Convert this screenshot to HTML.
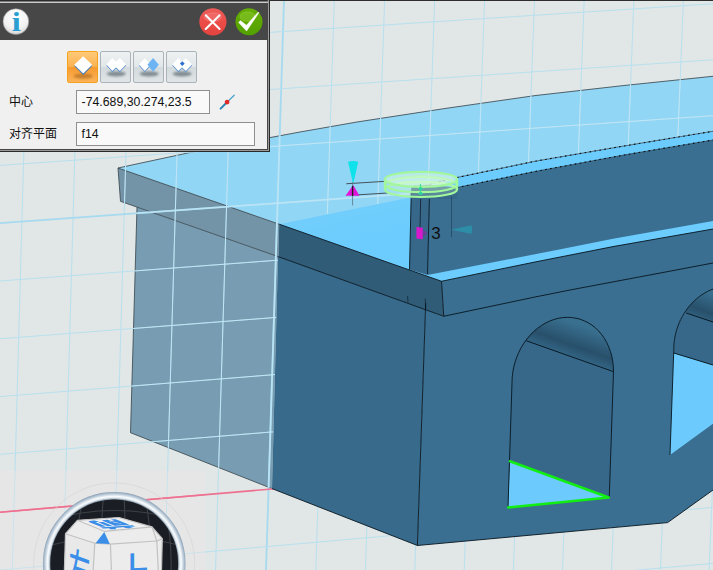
<!DOCTYPE html>
<html lang="zh">
<head>
<meta charset="utf-8">
<title>3D view</title>
<style>
html,body{margin:0;padding:0;}
body{width:713px;height:570px;overflow:hidden;background:#e1e6e6;position:relative;font-family:"Liberation Sans","Noto Sans CJK SC",sans-serif;}
#scene{position:absolute;left:0;top:0;width:713px;height:570px;display:block;}
#panel{position:absolute;left:0;top:0;width:267px;height:149px;background:#f0f0f0;border-right:1px solid #464646;border-bottom:1px solid #464646;box-shadow:1px 1px 0 0 #9a9a9a, 1px 0 0 0 #9a9a9a, 0 1px 0 0 #9a9a9a, 2px 2px 0 0 #2a2a2a, 2px 0 0 0 #2a2a2a, 0 2px 0 0 #2a2a2a;}
#topline{position:absolute;left:0;top:0;width:713px;height:1px;background:#2e2e2e;}
#phead{position:absolute;left:0;top:0;width:267px;height:40px;background:#474747;border-top:2px solid #2b2b2b;box-sizing:border-box;}
#phead:before{content:"";position:absolute;left:0;top:-1px;width:268px;height:2px;background:linear-gradient(#7a7a7a 0,#7a7a7a 50%,#cacaca 50%,#cacaca 100%);}
.lbl{position:absolute;left:9px;font-size:12px;color:#111;line-height:14px;white-space:nowrap;}
.inp{position:absolute;left:76px;height:22px;border:1px solid #8f8f8f;background:#f9f9f9;box-sizing:content-box;font-size:12.3px;line-height:22px;color:#111;padding-left:4.6px;white-space:nowrap;}
.btn{position:absolute;top:51px;width:29px;height:30px;border:1px solid #a9b3b9;border-radius:2px;background:linear-gradient(#eef1f2 0%,#e2e7e9 50%,#d3dadd 51%,#dfe4e6 100%);}
.btn.sel{border-color:#f5a21c;background:linear-gradient(#ffc978 0%,#fbb352 48%,#f79a2e 52%,#fbb45a 100%);}
.btn svg{position:absolute;left:0;top:0;}
</style>
</head>
<body>
<svg id="scene" width="713" height="570" viewBox="0 0 713 570">
<defs>
<linearGradient id="soffit1" gradientUnits="userSpaceOnUse" x1="560" y1="318" x2="548" y2="352">
<stop offset="0" stop-color="#39708f"/><stop offset="0.6" stop-color="#28506b"/><stop offset="1" stop-color="#356a8b"/>
</linearGradient>
<linearGradient id="soffit2" gradientUnits="userSpaceOnUse" x1="706" y1="290" x2="694" y2="322">
<stop offset="0" stop-color="#39708f"/><stop offset="0.6" stop-color="#28506b"/><stop offset="1" stop-color="#356a8b"/>
</linearGradient>
<linearGradient id="topfade" gradientUnits="userSpaceOnUse" x1="340" y1="205" x2="352" y2="250">
<stop offset="0" stop-color="#72cefc"/><stop offset="1" stop-color="#6bccfd"/>
</linearGradient>
<clipPath id="arch1"><path id="a1p" d="M512.0,382.8 L512.2,377.6 L512.8,372.3 L513.7,367.2 L515.1,362.1 L516.8,357.1 L518.8,352.3 L521.2,347.6 L523.9,343.2 L526.9,339.0 L530.1,335.2 L533.6,331.6 L537.4,328.4 L541.3,325.6 L545.4,323.1 L549.6,321.1 L553.9,319.5 L558.3,318.3 L562.8,317.6 L567.2,317.3 L571.6,317.5 L575.9,318.2 L580.1,319.2 L584.2,320.8 L588.1,322.7 L591.9,325.1 L595.4,327.8 L598.6,331.0 L601.6,334.5 L604.3,338.3 L606.7,342.4 L608.7,346.8 L610.4,351.4 L611.8,356.2 L612.7,361.1 L613.3,366.2 L613.5,371.4 L609.25,497.5 L508,507.5 Z"/></clipPath>
<clipPath id="arch2"><path id="a2p" d="M673.8,349.6 L673.8,346.2 L674.1,342.8 L674.5,339.4 L675.1,336.0 L675.9,332.7 L676.8,329.3 L677.9,326.1 L679.2,322.9 L680.6,319.7 L682.2,316.7 L683.9,313.7 L685.8,310.9 L687.7,308.1 L689.8,305.5 L692.1,303.1 L694.4,300.7 L696.8,298.6 L699.4,296.5 L702.0,294.7 L704.7,293.0 L707.4,291.5 L710.2,290.2 L713.1,289.0 L716.0,288.1 L716,421.5 L670,455 Z"/></clipPath>
<clipPath id="ovlclip">
<path d="M118,168 L190,152.5 L270,137.6 L300,132 L357,122 L445,108.5 L535,95.6 L624,85.5 L713,76.25 L713,131.25 L624,146 L535,161.25 L457,177.5 L410,197.5 L279.2,224.2 L272,488.6 L130.5,432.7 L137,207.1 L120.5,201.3 Z"/>
</clipPath>
</defs>
<rect x="0" y="0" width="713" height="570" fill="#e1e6e6"/>

<!-- overlay (grid plane in front) model parts -->
<g id="ovl">
<path d="M118,168 L190,152.5 L270,137.6 L300,132 L357,122 L445,108.5 L535,95.6 L624,85.5 L713,76.25 L713,131.25 L624,146 L535,161.25 L457,177.5 L410,197.5 L279.2,224.2 Z" fill="#92d6f5"/>
<path d="M118,168 L279.2,224.2 L278.4,256.7 L120.5,201.3 Z" fill="#7394a6"/>
<path d="M137,207.1 L278,256.5 L272,488.6 L130.5,432.7 Z" fill="#789db2"/>
<g fill="none" stroke="#3c4a52" stroke-width="1" stroke-opacity="0.85">
<path d="M118,168 L190,152.5 L270,137.6 L300,132 L357,122 L445,108.5 L535,95.6 L624,85.5 L713,76.25"/>
<path d="M118,168 L279.2,224.2"/>
<path d="M118,168 L120.5,201.3 L278.4,256.7"/>
<path d="M137,207.1 L130.5,432.7 L272,488.6"/>
</g>
</g>

<!-- grid -->
<g stroke="#b8e0ef" stroke-width="1" fill="none" style="--maj:#a6daf0"><g id="grid">
<path d="M-23.2,0 L-38.5,570" stroke-width="1"/>
<path d="M28.0,0 L12.3,570" stroke-width="1"/>
<path d="M79.2,0 L63.1,570" stroke-width="1"/>
<path d="M130.4,0 L113.9,570" stroke-width="1"/>
<path d="M181.6,0 L164.7,570" stroke-width="1"/>
<path d="M232.8,0 L215.5,570" stroke-width="1"/>
<path d="M284.0,0 L266.0,570" stroke-width="1.8" style="stroke:var(--maj)"/>
<path d="M334.3,0 L315.8,570" stroke-width="1"/>
<path d="M384.6,0 L365.4,570" stroke-width="1"/>
<path d="M434.7,0 L414.8,570" stroke-width="1"/>
<path d="M484.6,0 L464.2,570" stroke-width="1"/>
<path d="M534.5,0 L513.4,570" stroke-width="1"/>
<path d="M584.2,0 L562.5,570" stroke-width="1"/>
<path d="M633.9,0 L611.5,570" stroke-width="1"/>
<path d="M683.4,0 L660.4,570" stroke-width="1"/>
<path d="M732.7,0 L709.1,570" stroke-width="1"/>
<path d="M0,-8.0 L713,-52.2" stroke-width="1"/>
<path d="M0,49.8 L713,3.8" stroke-width="1"/>
<path d="M0,107.6 L713,59.8" stroke-width="1"/>
<path d="M0,165.4 L713,115.7" stroke-width="1"/>
<path d="M0,223.2 L713,171.7" stroke-width="1.8" style="stroke:var(--maj)"/>
<path d="M0,281.0 L713,227.6" stroke-width="1"/>
<path d="M0,338.8 L713,283.6" stroke-width="1"/>
<path d="M0,396.6 L713,339.5" stroke-width="1"/>
<path d="M0,454.4 L713,395.5" stroke-width="1"/>
<path d="M0,512.2 L713,451.4" stroke="#ee6f8f" stroke-width="1.6"/>
<path d="M0,570.0 L713,507.4" stroke-width="1"/>
<path d="M0,627.8 L713,563.3" stroke-width="1"/>
</g></g>
<g clip-path="url(#ovlclip)" stroke="#c4eaf9" stroke-opacity="0.56" stroke-width="1" fill="none" style="--maj:#c8ecfa"><use href="#grid"/></g>

<!-- opaque model parts -->
<g id="solid">
<path d="M279.2,224.2 L410,197.5 L457,177.5 L535,161.25 L624,146 L713,131.25 L713,232 L441.5,281.25 Z" fill="#6bccfd"/>
<path d="M279.2,224.2 L410,197.5 L410,268 Z" fill="url(#topfade)"/>
<path d="M429.5,192 L457,187.5 L535,171.5 L624,155 L713,140 L713,220.9 L613,238.8 L558,249.8 L427.5,275 Z" fill="#3a6f91"/>
<path d="M411.25,190 L429.5,192 L427.5,275 L409.5,269.5 Z" fill="#37688a"/>
<path d="M279.2,224.2 L441.5,281.25 L443.75,316.25 L278.4,256.7 Z" fill="#305c78"/>
<path d="M278,256.5 L425.5,309.5 L417.4,545.5 L272,488.6 Z" fill="#376a8b"/>
<path d="M441.5,281.25 L535,262 L613,246.6 L713,229 L713,490 L667.6,522.6 L417.4,545.5 L425.5,309.5 L443.75,316.25 Z" fill="#3a6f91"/>
<!-- arch 1 -->
<g clip-path="url(#arch1)">
<rect x="500" y="310" width="120" height="200" fill="#37688a"/>
<path d="M500,332 L526.25,340.75 L613.75,371.75 L620,374 L620,310 L500,310 Z" fill="url(#soffit1)"/>
<path d="M510,461.25 L608.75,497.5 L508,507.5 Z" fill="#6ccbfc"/>
<path d="M526.25,340.75 L613.75,371.75" stroke="#0a1a24" stroke-width="1" fill="none"/>
</g>
<!-- arch 2 -->
<g clip-path="url(#arch2)">
<rect x="665" y="280" width="60" height="180" fill="#6ccbfc"/>
<path d="M665,350.4 L673.75,353 L713,365 L720,367 L720,280 L665,280 Z" fill="#37688a"/>
<path d="M665,306 L686.25,313 L713,322 L720,324 L720,280 L665,280 Z" fill="url(#soffit2)"/>
<path d="M686.25,313 L713,322 M673.75,353 L713,365" stroke="#0a1a24" stroke-width="1" fill="none"/>
</g>
<!-- edges -->
<g fill="none" stroke="#081620" stroke-width="1" stroke-opacity="0.9">
<path d="M279.2,224.2 L441.5,281.25 L535,262 L613,246.6 L713,229"/>
<path d="M441.5,281.25 L443.75,316.25"/>
<path d="M278.4,256.7 L443.75,316.25 L535,297 L570,290 L676.2,270 L713,263"/>
<path d="M425.7,303 L417.4,545.5"/>
<path d="M272,488.6 L417.4,545.5 L667.6,522.6 L713,490"/>
<path d="M512.0,382.8 L512.2,377.6 L512.8,372.3 L513.7,367.2 L515.1,362.1 L516.8,357.1 L518.8,352.3 L521.2,347.6 L523.9,343.2 L526.9,339.0 L530.1,335.2 L533.6,331.6 L537.4,328.4 L541.3,325.6 L545.4,323.1 L549.6,321.1 L553.9,319.5 L558.3,318.3 L562.8,317.6 L567.2,317.3 L571.6,317.5 L575.9,318.2 L580.1,319.2 L584.2,320.8 L588.1,322.7 L591.9,325.1 L595.4,327.8 L598.6,331.0 L601.6,334.5 L604.3,338.3 L606.7,342.4 L608.7,346.8 L610.4,351.4 L611.8,356.2 L612.7,361.1 L613.3,366.2 L613.5,371.4 L609.25,497.5"/>
<path d="M512.0,382.8 L508,507.5"/>
<path d="M673.8,349.6 L673.8,346.2 L674.1,342.8 L674.5,339.4 L675.1,336.0 L675.9,332.7 L676.8,329.3 L677.9,326.1 L679.2,322.9 L680.6,319.7 L682.2,316.7 L683.9,313.7 L685.8,310.9 L687.7,308.1 L689.8,305.5 L692.1,303.1 L694.4,300.7 L696.8,298.6 L699.4,296.5 L702.0,294.7 L704.7,293.0 L707.4,291.5 L710.2,290.2 L713.1,289.0 L716.0,288.1"/>
<path d="M673.8,349.6 L670,455"/>
<path d="M411.25,192 L409.5,269.5"/>
<path d="M429.5,194 L427.5,274"/>
<path d="M420.75,195 L419.8,239" stroke-opacity="0.7"/>
<path d="M407.6,296 L408,302.5 M425.2,298.5 L425.7,309" stroke-opacity="0.6"/>
<path d="M457,187.5 L535,171.5 L624,155 L713,140 M457,177.5 L535,161.25 L624,146 L713,131.25" stroke="#2d4050" stroke-opacity="0.75" stroke-width="0.9"/>
<path d="M457,187.5 L535,171.5 L624,155 L713,140 M457,177.5 L535,161.25 L624,146 L713,131.25" stroke="#000" stroke-width="1.1" stroke-dasharray="1.6 3.4"/>
</g>
<!-- selected green edges -->
<path d="M510,461.25 L608.75,497.5 L508,507.5" fill="none" stroke="#12ee12" stroke-width="2.4" stroke-linejoin="round" stroke-linecap="round"/>
</g>

<!-- manipulator -->
<g id="manip">
<path d="M346.25,183.75 L386.25,181.25 M355,195 L387.5,193" stroke="#2a2a2a" stroke-opacity="0.85" stroke-width="0.9" fill="none"/>
<path d="M352.6,182 L352.6,205.5" stroke="#54707f" stroke-opacity="0.85" stroke-width="0.9" fill="none"/>
<path d="M348,161.75 Q353.2,160 358.25,161.75 L353.6,182.5 L352.8,182.5 Z" fill="#0fe2ea"/>
<path d="M353.25,185 L359.5,195.75 L345.5,195.75 Z" fill="#e014d8"/>
<path d="M352.6,186 L352.6,196" stroke="#222" stroke-width="1.4"/>
<!-- ring -->
<path d="M411.2,189 Q411.3,185.6 415,185.4 L429.5,185 L457,187.5 L457,199 L411.2,199 Z" fill="#37688a"/>
<path d="M420.5,187 L448,179.2" stroke="#5a3030" stroke-width="0.9" stroke-dasharray="3 1.6" fill="none" stroke-opacity="0.8"/>
<g fill="#d4fad4" fill-opacity="0.22" stroke="#a2f79c" stroke-width="2.2">
<ellipse cx="421" cy="189.4" rx="36" ry="7.6"/>
<ellipse cx="421" cy="184.6" rx="36" ry="7.6"/>
<ellipse cx="421" cy="179.3" rx="36.2" ry="7.5" fill="#e2fbe2" fill-opacity="0.5"/>
</g>
<path d="M387,181.5 Q421,169.5 455,181.5" fill="none" stroke="#b8f8b8" stroke-width="1.2" stroke-opacity="0.8"/>
<path d="M384.9,179.3 L384.9,189.4 M457.1,179.3 L457.1,189.4" stroke="#a2f79c" stroke-width="2.2"/>
<path d="M420.5,184 L420.5,195" stroke="#4ee08a" stroke-width="1.2"/>
<path d="M418,188.8 L420.6,186.8 L423.4,188.8 L420.6,190.6 Z M418,193.4 L420.6,191.6 L423.4,193.4 L420.6,195.2 Z" fill="#2fd0a0"/>
<path d="M416.4,227 L422.8,227.8 L422.8,239.2 L416.4,238.4 Z" fill="#d818cc"/>
<path d="M422.8,229.6 L427.8,233.2 L422.8,236.8 Z" fill="#6a3f9a"/>
<path d="M451.5,197 L451.5,237" stroke="#0a1a24" stroke-width="0.8" stroke-opacity="0.45" fill="none"/>
<path d="M450.8,229.8 L471.5,225.2 Q473,229.5 471.5,233.8 Z" fill="#2a98b0" fill-opacity="0.75"/>
<text x="431.3" y="238.9" font-family="'Liberation Sans',sans-serif" font-size="17" fill="#111">3</text>
</g>
</svg>
<div id="topline"></div>
<div id="panel"><div id="phead"></div>
<svg width="270" height="152" viewBox="0 0 270 152" style="position:absolute;left:0;top:0">
<defs>
<radialGradient id="gi" cx="0.5" cy="0.3" r="0.8"><stop offset="0" stop-color="#ffffff"/><stop offset="0.6" stop-color="#f2f2f2"/><stop offset="1" stop-color="#c8c8c8"/></radialGradient>
<linearGradient id="gx" x1="0" y1="0" x2="0" y2="1"><stop offset="0" stop-color="#ee5e5a"/><stop offset="0.5" stop-color="#ec4c48"/><stop offset="1" stop-color="#e4443f"/></linearGradient>
<linearGradient id="gc" x1="0" y1="0" x2="0" y2="1"><stop offset="0" stop-color="#66ae08"/><stop offset="0.5" stop-color="#5ca800"/><stop offset="1" stop-color="#52a000"/></linearGradient>
</defs>
<circle cx="15.9" cy="21.6" r="12.9" fill="url(#gi)" stroke="#8a8a8a" stroke-width="0.6"/>
<text transform="translate(16.2,31.2) scale(1.18,1)" text-anchor="middle" font-family="'Liberation Serif',serif" font-weight="bold" font-size="27.5" fill="#2b9fd2">i</text>
<circle cx="212.9" cy="21.8" r="13.6" fill="url(#gx)"/>
<ellipse cx="212.9" cy="17.1" rx="8.6" ry="4.3" fill="#ffffff" fill-opacity="0.12" stroke="#ffb0a8" stroke-opacity="0.35" stroke-width="0.6"/>
<path d="M205.7,15.2 L219.6,29 M219.6,15.2 L205.7,29" stroke="#ffffff" stroke-width="2" stroke-linecap="round" fill="none"/>
<circle cx="249" cy="21.8" r="13.5" fill="url(#gc)"/>
<ellipse cx="247.6" cy="16.6" rx="7.6" ry="4.7" fill="#c8f070" fill-opacity="0.22" stroke="#d8f060" stroke-opacity="0.4" stroke-width="0.6"/>
<path d="M238.6,22.6 L240.4,20.6 L246.5,25.2 L257.9,12.4 L259,12.6 L246.6,31 Z" fill="#ffffff" stroke="#ffffff" stroke-width="0.5" stroke-linejoin="round"/>
<!-- pick icon -->
<path d="M220.6,108.6 L227,102.2" stroke="#2a86b2" stroke-width="2" stroke-linecap="round" fill="none"/><path d="M227,102.2 L234.2,95.2" stroke="#4aa2cc" stroke-width="1.2" stroke-linecap="round" fill="none"/>
<circle cx="227.1" cy="102.1" r="2.4" fill="#e02a2a"/>
</svg>
<div class="btn sel" style="left:67px"><svg width="29" height="30" viewBox="0 0 29 30"><ellipse cx="15.2" cy="24.2" rx="9.5" ry="2.6" fill="#7a4208" fill-opacity="0.4" style="filter:blur(1.3px)"/><path d="M6.2,13.9 L15.2,5.4 L24.2,13.9 L15.2,22.9 Z" fill="#3f78b8"/><path d="M6.2,12.7 L15.2,4.2 L24.2,12.7 L15.2,21.4 Z" fill="#ffffff"/></svg></div>
<div class="btn" style="left:100px"><svg width="29" height="30" viewBox="0 0 29 30"><ellipse cx="15.2" cy="21.8" rx="9.5" ry="2.6" fill="#4a5860" fill-opacity="0.6" style="filter:blur(1.3px)"/><path d="M5.3,13.6 L11.3,7.1 L15.1,10.6 L18.9,7.1 L25.2,13.6 L18.9,20.1 L15.1,16.6 L11.3,20.1 Z" fill="#4a86c8"/><path d="M5.3,12.5 L11.3,6 L15.1,9.6 L18.9,6 L25.2,12.5 L18.9,18.9 L15.1,15.4 L11.3,18.9 Z" fill="#ffffff"/></svg></div>
<div class="btn" style="left:133px"><svg width="29" height="30" viewBox="0 0 29 30"><ellipse cx="15.2" cy="21.8" rx="9.5" ry="2.6" fill="#4a5860" fill-opacity="0.6" style="filter:blur(1.3px)"/><path d="M4.8,13.6 L10.8,7.4 L16.8,13.6 L10.8,20.1 Z" fill="#4a86c8"/><path d="M4.8,12.5 L10.8,6.3 L16.8,12.5 L10.8,18.9 Z" fill="#ffffff"/><path d="M13.4,12.7 L19.1,6 L24.8,12.7 L19.1,19.8 Z" fill="#6cb4f4"/></svg></div>
<div class="btn" style="left:166px"><svg width="29" height="30" viewBox="0 0 29 30"><ellipse cx="15.2" cy="21.8" rx="9.5" ry="2.6" fill="#4a5860" fill-opacity="0.6" style="filter:blur(1.3px)"/><path d="M5.3,13.6 L11.3,7.1 L15.1,10.6 L18.9,7.1 L25.2,13.6 L18.9,20.1 L15.1,16.6 L11.3,20.1 Z" fill="#4a86c8"/><path d="M5.3,12.5 L11.3,6 L15.1,9.6 L18.9,6 L25.2,12.5 L18.9,18.9 L15.1,15.4 L11.3,18.9 Z" fill="#ffffff"/><path d="M12.9,11.6 L15.3,9.2 L17.7,11.6 L15.3,14 Z" fill="#2f6fd0"/></svg></div>
<div class="lbl" style="top:95px">中心</div>
<div class="lbl" style="top:127px">对齐平面</div>
<div class="inp" style="top:90px;width:127.4px">-74.689,30.274,23.5</div>
<div class="inp" style="top:122px;width:172.4px">f14</div>
</div>
<div id="cube" style="position:absolute;left:0;top:471px;width:205px;height:99px;overflow:hidden;background:rgba(246,232,232,0.3);">
<svg width="205" height="99" viewBox="0 471 205 99">
<defs>
<radialGradient id="ringrg" gradientUnits="userSpaceOnUse" cx="114.2" cy="563.4" r="71.3"><stop offset="0.897" stop-color="#7f8e9c"/><stop offset="0.918" stop-color="#dfe8ef"/><stop offset="0.94" stop-color="#f8fbfd"/><stop offset="0.968" stop-color="#c5d3df"/><stop offset="0.988" stop-color="#a3b6c8"/><stop offset="1" stop-color="#90a4b7"/></radialGradient>
<clipPath id="disc"><circle cx="114.2" cy="563.4" r="65"/></clipPath>
</defs>
<path d="M0,512.2 L205,494.7" stroke="#ee6f8f" stroke-width="1.6" fill="none"/>
<circle cx="114.2" cy="563.4" r="80.5" fill="none" stroke="#d6d6d6" stroke-width="0.7"/>
<circle cx="114.2" cy="563.4" r="66" fill="#1a1e24"/>
<g clip-path="url(#disc)" stroke="#3d4248" stroke-width="1.1" fill="none">
<path d="M40,523 Q114,498 190,523 M40,548 Q114,526 190,548"/>
<path d="M84,495 Q74,535 76,570 M104,492 Q100,530 101,570 M123.8,492 Q126,530 126,570 M145,495 Q152,535 151,570 M165,505 Q172,540 171,570"/>
</g>
<circle cx="114.2" cy="563.4" r="67.6" fill="none" stroke="url(#ringrg)" stroke-width="7.4"/>
<!-- cube faces -->
<path d="M77.4,520.3 L119,517.5 L152,526.9 L162.3,538.7 L161.5,570 L64.4,570 L65.5,533.7 Z" fill="#ececec"/>
<path d="M77.4,520.3 L119,517.5 L152,526.9 L105,531 Z" fill="#f0f0f0"/>
<path d="M65.5,533.7 L94.8,543.2 L93.2,570 L64.4,570 Z" fill="#e9e9e9"/>
<g stroke="#c2c2c2" stroke-width="1.2" fill="none" stroke-linejoin="round">
<path d="M77.4,520.3 L119,517.5 L152,526.9 L162.3,538.7 L161.5,570 M64.4,570 L65.5,533.7 L77.4,520.3"/>
<path d="M77.4,520.3 L104.3,531.3 L152,526.9"/>
<path d="M65.5,533.7 L94.8,543.2 L93.2,570 M110.4,544.2 L111.4,570 M110.4,544.2 L156.8,541 L158.3,570"/>
<path d="M94.8,543.2 L110.4,544.2 M152,526.9 L156.8,541 L162.3,538.7"/>
</g>
<path d="M104.3,532.1 L109.8,544 L95.6,543.2 Z" fill="#3a8ee8"/>
<text transform="matrix(-1.839,0.124,-1.189,-0.486,120.54,519.71)" font-family="'Noto Sans CJK SC',sans-serif" font-weight="900" font-size="19" fill="#3a8ee8">前</text>
<text transform="matrix(0.72,0.26,-0.04,1.35,68,580)" font-family="'Noto Sans CJK SC',sans-serif" font-weight="500" font-size="30" fill="#3a8ee8">左</text>
<text transform="matrix(1.1,-0.08,0,1.58,115.8,596.5)" font-family="'Noto Sans CJK SC',sans-serif" font-weight="500" font-size="32" fill="#3a8ee8">上</text>
</svg>
</div>
</body>
</html>
